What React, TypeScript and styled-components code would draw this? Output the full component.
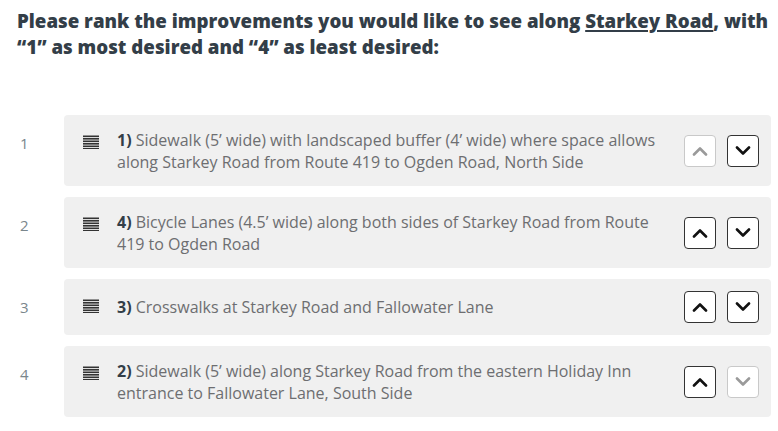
import React from "react"
import styled, { createGlobalStyle } from "styled-components"

const items = [
  {
    id: 1,
    label: "1)",
    text: "Sidewalk (5’ wide) with landscaped buffer (4’ wide) where space allows along Starkey Road from Route 419 to Ogden Road, North Side",
  },
  {
    id: 4,
    label: "4)",
    text: "Bicycle Lanes (4.5’ wide) along both sides of Starkey Road from Route 419 to Ogden Road",
  },
  {
    id: 3,
    label: "3)",
    text: "Crosswalks at Starkey Road and Fallowater Lane",
  },
  {
    id: 2,
    label: "2)",
    text: "Sidewalk (5’ wide) along Starkey Road from the eastern Holiday Inn entrance to Fallowater Lane, South Side",
  },
]

const GlobalStyle = createGlobalStyle`
  body {
    margin: 0;
    background: #fff;
    font-family: "Open Sans", "Liberation Sans", sans-serif;
  }
`

function DragHandle() {
  return (
    <svg width="16" height="14" viewBox="0 0 16 14">
      {[0, 1, 2, 3, 4, 5].map((i) => (
        <rect key={i} x="0" y={i * 2.5 + 0.5} width="16" height="1.6" fill="#333" />
      ))}
    </svg>
  )
}

function Chevron({ up }: { up?: boolean }) {
  return (
    <svg width="16" height="10" viewBox="0 0 16 10">
      <polyline
        points={up ? "2,8.5 8,2.5 14,8.5" : "2,1.5 8,7.5 14,1.5"}
        fill="none"
        stroke="currentColor"
        strokeWidth="2.6"
        strokeLinecap="round"
        strokeLinejoin="round"
      />
    </svg>
  )
}

export default function App() {
  return (
    <Page>
      <GlobalStyle />
      <Question>
        Please rank the improvements you would like to see along <u>Starkey Road</u>, with
        “1” as most desired and “4” as least desired:
      </Question>
      <List>
        {items.map((item, i) => (
          <Row key={item.id}>
            <Rank>{i + 1}</Rank>
            <Card>
              <Handle>
                <DragHandle />
              </Handle>
              <Label>
                <b>{item.label}</b> {item.text}
              </Label>
              <Buttons>
                <MoveButton disabled={i === 0}>
                  <Chevron up />
                </MoveButton>
                <MoveButton disabled={i === items.length - 1}>
                  <Chevron />
                </MoveButton>
              </Buttons>
            </Card>
          </Row>
        ))}
      </List>
    </Page>
  )
}

const Page = styled.div`
  width: 778px;
  padding: 8px 0 0;
`

const Question = styled.h1`
  margin: 0 0 0 17px;
  font-size: 18.7px;
  line-height: 26px;
  font-weight: 800;
  color: #333e48;
  u {
    text-decoration-thickness: 1.5px;
    text-underline-offset: 2px;
  }
`

const List = styled.div`
  display: flex;
  flex-direction: column;
  gap: 11px;
  margin-top: 55px;
`

const Row = styled.div`
  display: flex;
  align-items: stretch;
`

const Rank = styled.div`
  width: 64px;
  box-sizing: border-box;
  padding: 18px 0 0 20px;
  font-size: 15px;
  color: #7a868c;
`

const Card = styled.div`
  flex: 0 0 707px;
  display: flex;
  align-items: center;
  gap: 18px;
  box-sizing: border-box;
  padding: 12px 12px 12px 19px;
  background: #f0f0f0;
  border-radius: 4px;
`

const Handle = styled.div`
  align-self: flex-start;
  display: flex;
  padding-top: 8px;
`

const Label = styled.div`
  flex: 1;
  margin: 1.5px 0;
  font-size: 16px;
  line-height: 22px;
  color: #6d6e71;
  b {
    color: #333e48;
    font-weight: 700;
  }
`

const Buttons = styled.div`
  display: flex;
  gap: 11px;
`

const MoveButton = styled.button`
  width: 32px;
  height: 32px;
  padding: 0;
  display: flex;
  align-items: center;
  justify-content: center;
  background: #fff;
  border: 1.5px solid ${(p) => (p.disabled ? "#c9c9c9" : "#333")};
  border-radius: 4px;
  color: ${(p) => (p.disabled ? "#9a9a9a" : "#111")};
  cursor: pointer;
`
